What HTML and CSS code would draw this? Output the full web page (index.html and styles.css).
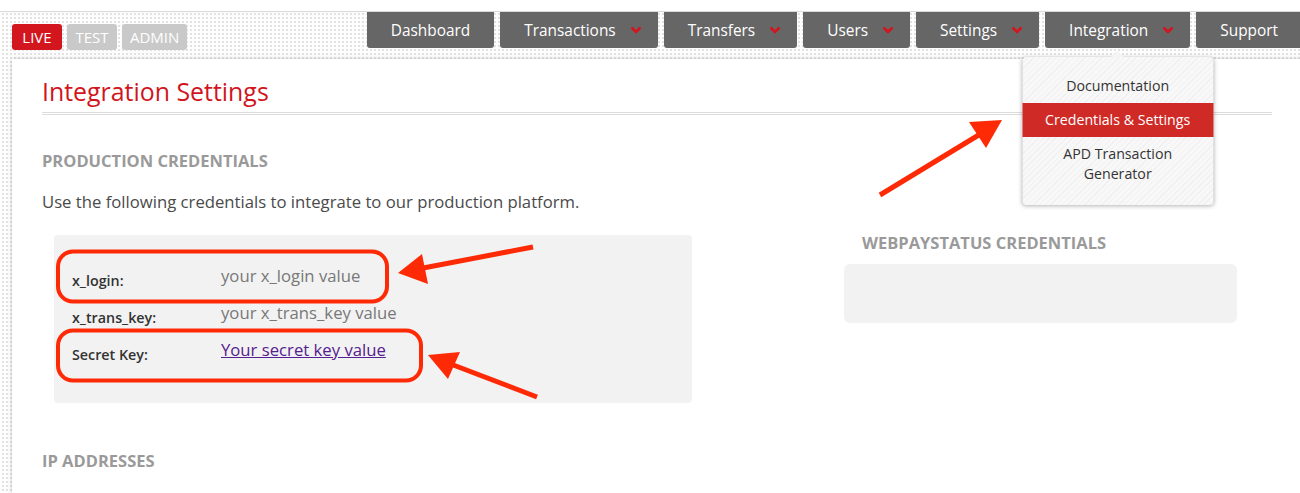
FILE: index.html
```html
<!DOCTYPE html>
<html lang="en">
<head>
<meta charset="utf-8">
<title>Integration Settings</title>
<link rel="stylesheet" href="styles.css">
</head>
<body>
<div class="topline"></div>
<header class="header">
  <div class="envs">
    <span class="env env-live">LIVE</span>
    <span class="env">TEST</span>
    <span class="env">ADMIN</span>
  </div>
  <nav class="nav">
    <a class="tab">Dashboard</a>
    <a class="tab has-menu">Transactions <svg class="chev" viewBox="0 0 12 8"><path d="M1.5 1.5 L6 6 L10.5 1.5"/></svg></a>
    <a class="tab has-menu">Transfers <svg class="chev" viewBox="0 0 12 8"><path d="M1.5 1.5 L6 6 L10.5 1.5"/></svg></a>
    <a class="tab has-menu">Users <svg class="chev" viewBox="0 0 12 8"><path d="M1.5 1.5 L6 6 L10.5 1.5"/></svg></a>
    <a class="tab has-menu">Settings <svg class="chev" viewBox="0 0 12 8"><path d="M1.5 1.5 L6 6 L10.5 1.5"/></svg></a>
    <div class="tab has-menu tab-open">Integration <svg class="chev" viewBox="0 0 12 8"><path d="M1.5 1.5 L6 6 L10.5 1.5"/></svg>
      <div class="dropdown">
        <a class="dd-item">Documentation</a>
        <a class="dd-item dd-active">Credentials &amp; Settings</a>
        <a class="dd-item">APD Transaction<br>Generator</a>
      </div>
    </div>
    <a class="tab">Support</a>
  </nav>
</header>
<main class="card">
  <h1 class="title">Integration Settings</h1>
  <h2 class="section-title">PRODUCTION CREDENTIALS</h2>
  <p class="lead">Use the following credentials to integrate to our production platform.</p>
  <div class="cred-row">
    <div class="cred-box">
      <div class="cred"><span class="cred-label">x_login:</span><span class="cred-value">your x_login value</span></div>
      <div class="cred"><span class="cred-label">x_trans_key:</span><span class="cred-value">your x_trans_key value</span></div>
      <div class="cred"><span class="cred-label">Secret Key:</span><a class="cred-value cred-link" href="#secret">Your secret key value</a></div>
    </div>
    <div class="webpay">
      <h2 class="section-title webpay-title">WEBPAYSTATUS CREDENTIALS</h2>
      <div class="webpay-box"></div>
    </div>
  </div>
  <h2 class="section-title ip-title">IP ADDRESSES</h2>
</main>
<svg class="annotations" width="1300" height="493" viewBox="0 0 1300 493">
  <g fill="none" stroke="#fe2a05" stroke-width="4">
    <rect x="58" y="251.5" width="329" height="50" rx="15"/>
    <rect x="58" y="330.5" width="363" height="50" rx="15"/>
  </g>
  <g stroke="#fe2a05" stroke-width="5" stroke-linecap="butt">
    <line x1="533" y1="247" x2="418" y2="269"/>
    <line x1="537" y1="397" x2="448" y2="363"/>
    <line x1="880" y1="195" x2="982" y2="133"/>
  </g>
  <g fill="#fe2a05">
    <polygon points="398,273 422,254 428,284"/>
    <polygon points="428,355 460,352 448,379"/>
    <polygon points="1002,120 969,122 986,148"/>
  </g>
</svg>
</body>
</html>
```

FILE: styles.css
```css
html, body {
  margin: 0;
  padding: 0;
}
body {
  width: 1300px;
  height: 493px;
  overflow: hidden;
  position: relative;
  font-family: "Open Sans", "Liberation Sans", sans-serif;
  background-color: #fdfdfd;
  background-image: radial-gradient(circle, #e2e2e2 0.9px, transparent 1.1px);
  background-size: 4px 4px;
  background-position: 1px 0;
}
.topline {
  height: 11px;
  background: #fff;
  border-bottom: 1px solid #dadada;
}
.header {
  display: flex;
  align-items: flex-start;
  height: 47px;
  width: 1302px;
  padding-left: 12px;
  box-sizing: border-box;
}
.envs {
  display: flex;
  gap: 5px;
  margin-top: 12px;
}
.env {
  min-width: 50px;
  box-sizing: border-box;
  height: 26px;
  line-height: 26px;
  padding: 0 8px;
  text-align: center;
  font-size: 15px;
  color: #fff;
  background: #c9c9c9;
  border-radius: 3px;
}
.env-live {
  background: #d3161d;
}
.nav {
  display: flex;
  gap: 6px;
  margin-left: auto;
}
.tab {
  position: relative;
  display: flex;
  align-items: center;
  height: 36px;
  padding: 0 24px;
  background: #666666;
  color: #fff;
  font-size: 15.4px;
  border-radius: 0 0 3px 3px;
  white-space: nowrap;
}
.has-menu {
  padding-right: 16px;
}
.chev {
  width: 12px;
  height: 8px;
  margin-left: 14px;
  fill: none;
  stroke: #d4141e;
  stroke-width: 2.6;
}
.tab-open {
  z-index: 5;
}
.dropdown {
  position: absolute;
  top: 45px;
  left: 50%;
  transform: translateX(-50%);
  width: 191px;
  padding: 12px 0 14px;
  background-color: #f5f5f5;
  background-image: repeating-linear-gradient(135deg, #f0f0f0 0 1px, #f8f8f8 1px 4px);
  border-radius: 4px;
  box-shadow: 0 1px 4px rgba(0, 0, 0, 0.3);
  display: flex;
  flex-direction: column;
}
.dropdown::before {
  content: "";
  position: absolute;
  top: -6px;
  left: 50%;
  margin-left: -6px;
  border-left: 6px solid transparent;
  border-right: 6px solid transparent;
  border-bottom: 6px solid #f4f4f4;
}
.dd-item {
  display: block;
  padding: 7px 8px;
  line-height: 20px;
  font-size: 14.2px;
  color: #333;
  text-align: center;
}
.dd-active {
  background: #d02a26;
  color: #fff;
}
.card {
  display: block;
  margin-left: 12px;
  width: 1290px;
  box-sizing: border-box;
  min-height: 500px;
  padding: 15px 30px 40px;
  background: #fff;
  box-shadow: 0 0 4px rgba(0, 0, 0, 0.2);
}
.title {
  margin: 0;
  padding-bottom: 4px;
  font-size: 24.9px;
  font-weight: 400;
  line-height: normal;
  color: #d1151d;
  border-bottom: 3px double #dcdcdc;
}
.section-title {
  margin: 34px 0 0;
  font-size: 16.5px;
  font-weight: 700;
  line-height: normal;
  color: #9a9a9a;
}
.lead {
  margin: 18px 0 0;
  font-size: 16.7px;
  line-height: normal;
  color: #4a4a4a;
}
.cred-row {
  display: flex;
  align-items: flex-start;
  margin-top: 22px;
}
.cred-box {
  margin-left: 12px;
  width: 638px;
  box-sizing: border-box;
  padding: 29px 18px 28px;
  background: #f2f2f2;
  border-radius: 4px;
}
.cred {
  display: flex;
  align-items: flex-start;
  height: 37px;
}
.cred-label {
  width: 149px;
  flex: none;
  margin-top: 8px;
  font-size: 14.3px;
  line-height: 18px;
  font-weight: 600;
  color: #333;
}
.cred-value {
  font-size: 16.7px;
  line-height: 24px;
  color: #787878;
}
.cred-link {
  color: #55208f;
  text-decoration: underline;
}
.webpay {
  margin-left: 152px;
  width: 393px;
}
.webpay-title {
  margin: -4px 0 0;
  padding-left: 18px;
}
.webpay-box {
  margin-top: 10px;
  height: 59px;
  background: #f2f2f2;
  border-radius: 6px;
}
.ip-title {
  margin-top: 46px;
}
.annotations {
  position: absolute;
  top: 0;
  left: 0;
  z-index: 10;
  pointer-events: none;
}
```
